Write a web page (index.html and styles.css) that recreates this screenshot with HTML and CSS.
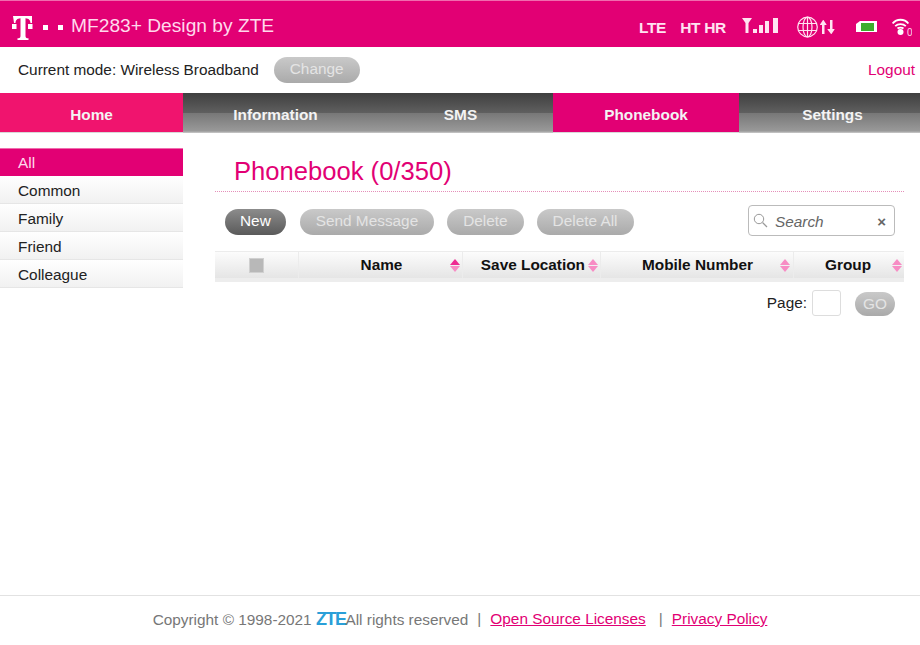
FILE: index.html
```html
<!DOCTYPE html>
<html lang="en">
<head>
    <meta charset="UTF-8">
    <title>MF283+ Design by ZTE</title>
    <link rel="stylesheet" href="styles.css">
</head>
<body>
    <div class="page">
        <header class="top-bar">
            <div class="brand">
                <svg class="logo" width="64" height="24" viewBox="0 0 64 24">
                    <g fill="#fff">
                        <path d="M13 0h19v7h-1.500c-.3-3-1.500-4.500-5-4.800v17.500c0 2 .7 2.500 3 2.600v1.700h-11v-1.700c2.300-.1 3-.6 3-2.600v-17.500c-3.500.3-4.700 1.800-5 4.800h-1.500z"/>
                        <rect x="12" y="8" width="4.500" height="5"/>
                        <rect x="28" y="8" width="4.500" height="5"/>
                        <rect x="43" y="9" width="5" height="5"/>
                        <rect x="58" y="9" width="5" height="5"/>
                    </g>
                </svg>
                <span class="brand-name">MF283+ Design by ZTE</span>
            </div>
            <div class="status">
                <span class="status-text lte">LTE</span>
                <span class="status-text hthr">HT HR</span>
                <svg class="signal" width="36" height="16" viewBox="0 0 36 16">
                    <g fill="#ffe3f1">
                        <path d="M0 0h10l-3.500 5v10h-3v-10z"/>
                        <rect x="11" y="11" width="4" height="4"/>
                        <rect x="17" y="7" width="4" height="8"/>
                        <rect x="23" y="3" width="4" height="12"/>
                        <rect x="31" y="0" width="5" height="15"/>
                    </g>
                </svg>
                <svg class="net" width="40" height="22" viewBox="0 0 40 22">
                    <g fill="none" stroke="#ffe3f1" stroke-width="1.200">
                        <circle cx="10.500" cy="11" r="9.800"/>
                        <ellipse cx="10.500" cy="11" rx="4.500" ry="9.800"/>
                        <path d="M10.500 1v20M1.500 7.500h18M1.500 14.500h18"/>
                    </g>
                    <path fill="#ffe3f1" d="M25 18v-9h-2v-.5l3-4.500h.5l3 4.500v.5h-2v9zM33 4v9h-2.500v.5l3.500 4.500h.5l3-4.500v-.5h-2v-9z"/>
                </svg>
                <svg class="battery" width="21" height="11" viewBox="0 0 21 11">
                    <path fill="#fff" d="M4 0h17v11h-21v-8z"/>
                    <rect x="5" y="2" width="13" height="8" fill="#3dae2b"/>
                </svg>
                <svg class="wifi" width="20" height="18" viewBox="0 0 20 18">
                    <g fill="none" stroke="#fff" stroke-width="1.800">
                        <path d="M.6 5.500c4-5 11.800-5 15.800 0"/>
                        <path d="M3.200 8.200c2.800-2.800 7.800-2.800 10.600 0"/>
                        <path d="M5.500 10.500c1.500-1.300 4.500-1.300 6 0"/>
                    </g>
                    <circle cx="8.500" cy="14" r="3" fill="#fff"/>
                    <text x="15" y="17.500" class="wifi-count">0</text>
                </svg>
            </div>
        </header>

        <div class="mode-bar">
            <div class="mode">
                <span>Current mode: Wireless Broadband</span>
                <span class="btn btn-disabled">Change</span>
            </div>
            <a class="logout" href="#">Logout</a>
        </div>

        <nav class="main-nav">
            <a class="nav-item nav-home" href="#">Home</a>
            <a class="nav-item nav-middle" href="#">Information</a>
            <a class="nav-item nav-middle" href="#">SMS</a>
            <a class="nav-item active" href="#">Phonebook</a>
            <a class="nav-item nav-settings" href="#">Settings</a>
        </nav>

        <main class="content">
            <ul class="groups">
                <li class="group selected">All</li>
                <li class="group">Common</li>
                <li class="group">Family</li>
                <li class="group">Friend</li>
                <li class="group">Colleague</li>
            </ul>

            <section class="phonebook">
                <h1 class="title">Phonebook (0/350)</h1>
                <div class="toolbar">
                    <div class="actions">
                        <span class="btn btn-dark">New</span>
                        <span class="btn btn-disabled">Send Message</span>
                        <span class="btn btn-disabled">Delete</span>
                        <span class="btn btn-disabled">Delete All</span>
                    </div>
                    <div class="search">
                        <svg width="15" height="15" viewBox="0 0 15 15">
                            <circle cx="6" cy="6" r="4.700" fill="none" stroke="#999" stroke-width="1"/>
                            <path d="M9.500 9.500l4.500 4.500" stroke="#999" stroke-width="1.200"/>
                        </svg>
                        <span class="search-label">Search</span>
                        <span class="search-clear">×</span>
                    </div>
                </div>
                <div class="table">
                    <div class="cell col-check"><span class="checkbox"></span></div>
                    <div class="cell col-name">
                        <span class="head">Name</span>
                        <span class="sort strong"></span>
                    </div>
                    <div class="cell col-location">
                        <span class="head">Save Location</span>
                        <span class="sort"></span>
                    </div>
                    <div class="cell col-mobile">
                        <span class="head">Mobile Number</span>
                        <span class="sort"></span>
                    </div>
                    <div class="cell col-group">
                        <span class="head">Group</span>
                        <span class="sort"></span>
                    </div>
                </div>
                <div class="pager">
                    <span>Page:</span>
                    <span class="page-input"></span>
                    <span class="btn btn-disabled btn-go">GO</span>
                </div>
            </section>
        </main>

        <footer class="footer">
            <span>Copyright © 1998-2021 <b class="zte">ZTE</b>All rights reserved</span>
            <span class="sep">|</span>
            <a href="#">Open Source Licenses</a>
            <span class="sep sep-wide">|</span>
            <a href="#">Privacy Policy</a>
        </footer>
    </div>
</body>
</html>
```

FILE: styles.css
```css
* {
    box-sizing: border-box;
}
body {
    font-family: "Liberation Sans", Arial, sans-serif;
    font-size: 15.360px;
    color: #222;
    background-color: #fff;
    margin: 0;
}
a {
    color: #e20074;
}
.page {
    display: flex;
    flex-direction: column;
    height: 645px;
    overflow: hidden;
}

/* top bar */
.top-bar {
    height: 47px;
    padding-top: 3px;
    background-color: #e20074;
    border-top: 1px solid #f06cae;
    display: flex;
    justify-content: space-between;
    align-items: center;
}
.brand {
    display: flex;
    align-items: center;
}
.logo {
    margin-top: 5px;
}
.brand-name {
    font-size: 19.200px;
    color: #ffd9ec;
    margin-left: 7px;
}
.status {
    display: flex;
    align-items: center;
    padding-right: 8px;
}
.status-text {
    font-weight: bold;
    font-size: 15.500px;
    color: #ffe3f1;
    letter-spacing: -0.3px;
    margin-top: 5px;
}
.hthr {
    margin-left: 14px;
}
.signal {
    margin-left: 16px;
}
.net {
    margin-left: 19px;
    margin-top: 3px;
}
.battery {
    margin-left: 19px;
    margin-top: 2px;
}
.wifi {
    margin-left: 15px;
    margin-top: 2px;
}
.wifi-count {
    font-size: 10px;
    fill: #ffd9ec;
}

/* mode bar */
.mode-bar {
    height: 46px;
    display: flex;
    justify-content: space-between;
    align-items: center;
    padding: 0 5px 0 18px;
}
.mode {
    display: flex;
    align-items: center;
    gap: 15px;
}
.logout {
    text-decoration: none;
}

/* buttons */
.btn {
    display: inline-block;
    height: 26px;
    line-height: 24px;
    padding: 0 16px;
    border-radius: 13px;
    color: #fff;
}
.btn-disabled {
    color: #e4e4e4;
    background: linear-gradient(#c9c9c9, #aaa);
}
.btn-dark {
    padding: 0 15px;
    margin-right: 1px;
    background: linear-gradient(#8c8c8c, #5a5a5a);
}

/* main navigation */
.main-nav {
    height: 40px;
    display: flex;
    background: linear-gradient(#3f3f3f 0, #5f5f5f 49%, #777 50%, #999 95%, #ccc 100%);
}
.nav-item {
    color: #f4f4f4;
    font-weight: bold;
    text-align: center;
    line-height: 44px;
    text-decoration: none;
}
.nav-home {
    width: 183px;
    background-color: #f0146e;
    border-bottom: 1px solid #d8d8d8;
}
.nav-middle {
    width: 185px;
}
.active {
    width: 186px;
    background-color: #e20074;
    border-bottom: 1px solid #d8d8d8;
}
.nav-settings {
    width: 181px;
    padding-left: 6px;
}

/* content */
.content {
    flex: 1;
    display: flex;
    align-items: flex-start;
}
.groups {
    width: 183px;
    list-style: none;
    margin: 15px 0 0;
    padding: 0;
    flex-shrink: 0;
}
.group {
    height: 28px;
    line-height: 30px;
    padding-left: 18px;
    background: linear-gradient(#fff, #f1f1f1);
    border-bottom: 1px solid #e6e6e6;
}
.selected {
    background: #e20074;
    color: #ffd9ec;
    border-bottom: none;
    border-top: 1px solid #f06cae;
    line-height: 28px;
}
.phonebook {
    width: 689px;
    margin-left: 32px;
}
.title {
    margin: 0;
    height: 59px;
    padding: 24px 0 0 19px;
    font-size: 25.600px;
    font-weight: normal;
    line-height: 28px;
    color: #e20074;
    border-bottom: 1px dotted #e58fb9;
}
.toolbar {
    display: flex;
    justify-content: space-between;
    align-items: flex-start;
    margin-top: 13px;
    padding: 0 9px 0 10px;
}
.actions {
    display: flex;
    gap: 13px;
    margin-top: 4px;
}
.search {
    width: 147px;
    height: 31px;
    border: 1px solid #bbb;
    border-radius: 4px;
    display: flex;
    align-items: center;
    padding: 0 8px 0 4px;
    color: #666;
}
.search-label {
    font-style: italic;
    margin: 3px 0 0 7px;
    flex: 1;
}
.search-clear {
    font-weight: bold;
    font-size: 15px;
    margin-top: 2px;
    color: #666;
}

/* table */
.table {
    display: grid;
    grid-template-columns: 84px 164px 138px 193px 110px;
    height: 31px;
    margin-top: 15px;
    border-top: 1px solid #ececec;
    border-bottom: 4px solid #ededed;
    background: linear-gradient(#fcfcfc, #e5e5e5);
}
.cell {
    display: flex;
    align-items: center;
    border-right: 1px solid #ececec;
    font-weight: bold;
    color: #111;
}
.col-group {
    border-right: none;
}
.col-check {
    justify-content: center;
}
.checkbox {
    width: 15px;
    height: 15px;
    background-color: #b8b8b8;
    border: 1px solid #d0d0d0;
}
.head {
    flex: 1;
    text-align: center;
    white-space: nowrap;
}
.col-name .head,
.col-mobile .head {
    padding-left: 14px;
}
.col-location .head {
    text-align: right;
    padding-right: 3px;
}
.col-group .head {
    padding-left: 10px;
}
.sort {
    display: flex;
    flex-direction: column;
    gap: 1px;
    margin-right: 2px;
    flex-shrink: 0;
}
.sort::before,
.sort::after {
    content: "";
    border-left: 5px solid transparent;
    border-right: 5px solid transparent;
}
.sort::before {
    border-bottom: 6px solid #f78cc4;
}
.sort::after {
    border-top: 6px solid #f78cc4;
}
.strong::before {
    border-bottom-color: #ee2a92;
}
.col-mobile .sort {
    margin-right: 3px;
}
.pager {
    display: flex;
    justify-content: flex-end;
    align-items: center;
    padding-right: 9px;
    margin-top: 8px;
}
.page-input {
    width: 29px;
    height: 26px;
    border: 1px solid #ddd;
    border-radius: 3px;
    margin-left: 5px;
}
.btn-go {
    width: 40px;
    height: 24px;
    line-height: 23px;
    padding: 0;
    text-align: center;
    margin: 2px 0 0 14px;
    border-radius: 12px;
}

/* footer */
.footer {
    height: 50px;
    padding-bottom: 3px;
    border-top: 1px solid #e2e2e2;
    color: #777;
    display: flex;
    justify-content: center;
    align-items: center;
    white-space: pre;
}
.zte {
    color: #2a9fd8;
    font-size: 18px;
    font-weight: bold;
    letter-spacing: -1.500px;
}
.sep {
    margin: 0 9px;
}
.sep-wide {
    margin: 0 9px 0 13px;
}
```
